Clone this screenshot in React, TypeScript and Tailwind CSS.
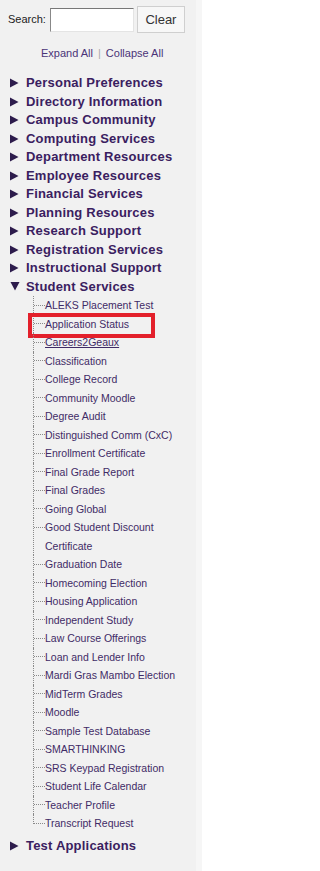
import React from "react";

const cats = [
  "Personal Preferences",
  "Directory Information",
  "Campus Community",
  "Computing Services",
  "Department Resources",
  "Employee Resources",
  "Financial Services",
  "Planning Resources",
  "Research Support",
  "Registration Services",
  "Instructional Support",
];

const subs = [
  "ALEKS Placement Test",
  "Application Status",
  "Careers2Geaux",
  "Classification",
  "College Record",
  "Community Moodle",
  "Degree Audit",
  "Distinguished Comm (CxC)",
  "Enrollment Certificate",
  "Final Grade Report",
  "Final Grades",
  "Going Global",
  "Good Student Discount Certificate",
  "Graduation Date",
  "Homecoming Election",
  "Housing Application",
  "Independent Study",
  "Law Course Offerings",
  "Loan and Lender Info",
  "Mardi Gras Mambo Election",
  "MidTerm Grades",
  "Moodle",
  "Sample Test Database",
  "SMARTHINKING",
  "SRS Keypad Registration",
  "Student Life Calendar",
  "Teacher Profile",
  "Transcript Request",
];

function TriRight() {
  return (
    <svg width="9" height="10" viewBox="0 0 9 10" className="shrink-0">
      <path d="M0 0.5 L8.5 5 L0 9.5 Z" fill="#2d1c4c" />
    </svg>
  );
}

function TriDown() {
  return (
    <svg width="10" height="9" viewBox="0 0 10 9" className="shrink-0">
      <path d="M0.5 0 L9.5 0 L5 8.5 Z" fill="#2d1c4c" />
    </svg>
  );
}

function Cat({ label, open }: { label: string; open?: boolean }) {
  return (
    <div className="flex items-center h-[18.5px] pl-[10px]">
      {open ? <TriDown /> : <TriRight />}
      <span
        className={`${open ? "ml-[6px]" : "ml-[7px]"} text-[13px] font-bold tracking-[0.2px] text-[#3a2060] whitespace-nowrap leading-[18.5px]`}
      >
        {label}
      </span>
    </div>
  );
}

export default function App() {
  return (
    <div className="w-[202px] h-[871px] flex bg-[#f6f6f6] font-['Liberation_Sans',Arial,sans-serif] overflow-hidden">
      <div className="w-[196px] bg-[#f1f1f1]">
        <div className="flex items-center pt-[6px] pl-[8px]">
          <span className="text-[11px] text-[#222]">Search:</span>
          <input
            className="ml-[4px] w-[84px] h-[24px] bg-white border border-t-[#777] border-l-[#888] border-r-[#e4e4e4] border-b-[#e4e4e4] outline-none"
            type="text"
          />
          <button className="ml-[3px] w-[48px] h-[27px] bg-[#f7f7f7] border border-[#cfcfcf] text-[13px] text-[#333] flex items-center justify-center">
            Clear
          </button>
        </div>
        <div className="mt-[13px] pl-[41px] text-[11px] leading-[14px] text-[#4a3478] whitespace-nowrap">
          <span>Expand All</span>
          <span className="mx-[5px] text-[#aaa]">|</span>
          <span>Collapse All</span>
        </div>
        <div className="mt-[14px]">
          {cats.map((c) => (
            <Cat key={c} label={c} />
          ))}
          <Cat label="Student Services" open />
          <div className="pl-[33px]">
            {subs.map((s, i) => {
              const last = i === subs.length - 1;
              return (
                <div key={s} className="flex relative">
                  {last ? (
                    <div className="w-[12px] h-[9.5px] shrink-0 border-l border-b border-dotted border-[#8a8a8a]" />
                  ) : (
                    <div className="w-[12px] shrink-0 self-stretch border-l border-dotted border-[#8a8a8a]">
                      <div className="h-[9.5px] border-b border-dotted border-[#8a8a8a]" />
                    </div>
                  )}
                  <span
                    className={`w-[134px] text-[10.5px] leading-[18.5px] text-[#3f2b66] ${
                      s === "Careers2Geaux" ? "underline" : ""
                    }`}
                  >
                    {s}
                  </span>
                  {s === "Application Status" && (
                    <span className="absolute left-[-5px] top-[-2px] w-[127px] h-[25px] border-[4px] border-[#e3202b] pointer-events-none" />
                  )}
                </div>
              );
            })}
          </div>
          <div className="mt-[4px]">
            <Cat label="Test Applications" />
          </div>
        </div>
      </div>
    </div>
  );
}
